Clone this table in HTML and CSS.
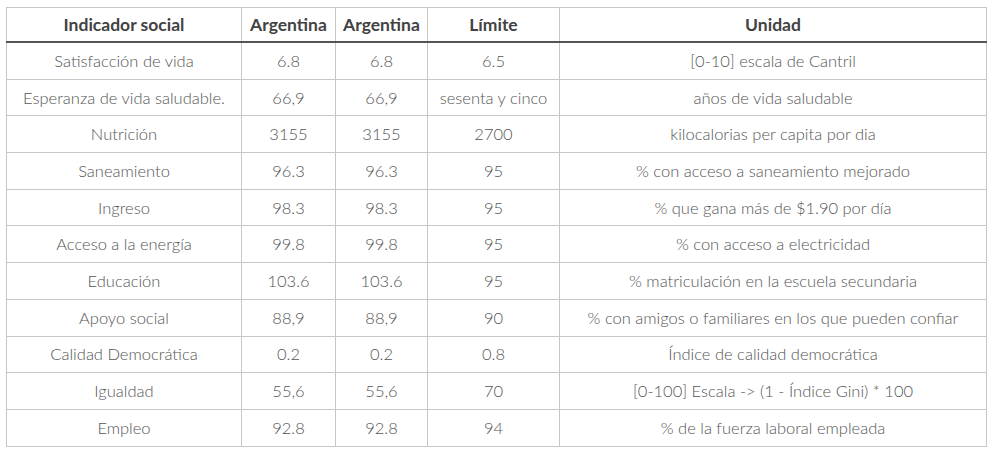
FILE: index.html
```html
<!DOCTYPE html>
<html lang="es">
<head>
<meta charset="utf-8">
<title>Indicadores sociales</title>
<link rel="stylesheet" href="styles.css">
</head>
<body>
<table class="data">
  <colgroup>
    <col class="c1"><col class="c2"><col class="c3"><col class="c4"><col class="c5">
  </colgroup>
  <thead>
    <tr><th>Indicador social</th><th>Argentina</th><th>Argentina</th><th>Límite</th><th>Unidad</th></tr>
  </thead>
  <tbody>
    <tr><td>Satisfacción de vida</td><td>6.8</td><td>6.8</td><td>6.5</td><td>[0-10] escala de Cantril</td></tr>
    <tr><td>Esperanza de vida saludable.</td><td>66,9</td><td>66,9</td><td>sesenta y cinco</td><td>años de vida saludable</td></tr>
    <tr><td>Nutrición</td><td>3155</td><td>3155</td><td>2700</td><td>kilocalorias per capita por dia</td></tr>
    <tr><td>Saneamiento</td><td>96.3</td><td>96.3</td><td>95</td><td>% con acceso a saneamiento mejorado</td></tr>
    <tr><td>Ingreso</td><td>98.3</td><td>98.3</td><td>95</td><td>% que gana más de $1.90 por día</td></tr>
    <tr><td>Acceso a la energía</td><td>99.8</td><td>99.8</td><td>95</td><td>% con acceso a electricidad</td></tr>
    <tr><td>Educación</td><td>103.6</td><td>103.6</td><td>95</td><td>% matriculación en la escuela secundaria</td></tr>
    <tr><td>Apoyo social</td><td>88,9</td><td>88,9</td><td>90</td><td>% con amigos o familiares en los que pueden confiar</td></tr>
    <tr><td>Calidad Democrática</td><td>0.2</td><td>0.2</td><td>0.8</td><td>Índice de calidad democrática</td></tr>
    <tr><td>Igualdad</td><td>55,6</td><td>55,6</td><td>70</td><td>[0-100] Escala -&gt; (1 - Índice Gini) * 100</td></tr>
    <tr><td>Empleo</td><td>92.8</td><td>92.8</td><td>94</td><td>% de la fuerza laboral empleada</td></tr>
  </tbody>
</table>
</body>
</html>
```

FILE: styles.css
```css
html, body {
  margin: 0;
  padding: 0;
  background: #ffffff;
}
body {
  padding: 7px 0 0 6px;
  font-family: Lato, "Open Sans", "Liberation Sans", sans-serif;
}
.data {
  border-collapse: collapse;
  table-layout: fixed;
  width: 980px;
  font-size: 16.5px;
  color: #555555;
}
.c1 { width: 235px; }
.c2 { width: 94px; }
.c3 { width: 92px; }
.c4 { width: 132px; }
.c5 { width: 427px; }
.data th, .data td {
  border: 1px solid #c9c7c4;
  text-align: center;
  vertical-align: middle;
  padding: 0 1px;
  white-space: nowrap;
}
.data td {
  height: 35.7px;
  font-weight: 300;
}
.data th {
  height: 33px;
  font-size: 17.5px;
  font-weight: 700;
  color: #424242;
  border-bottom: 2px solid #555555;
}
```
